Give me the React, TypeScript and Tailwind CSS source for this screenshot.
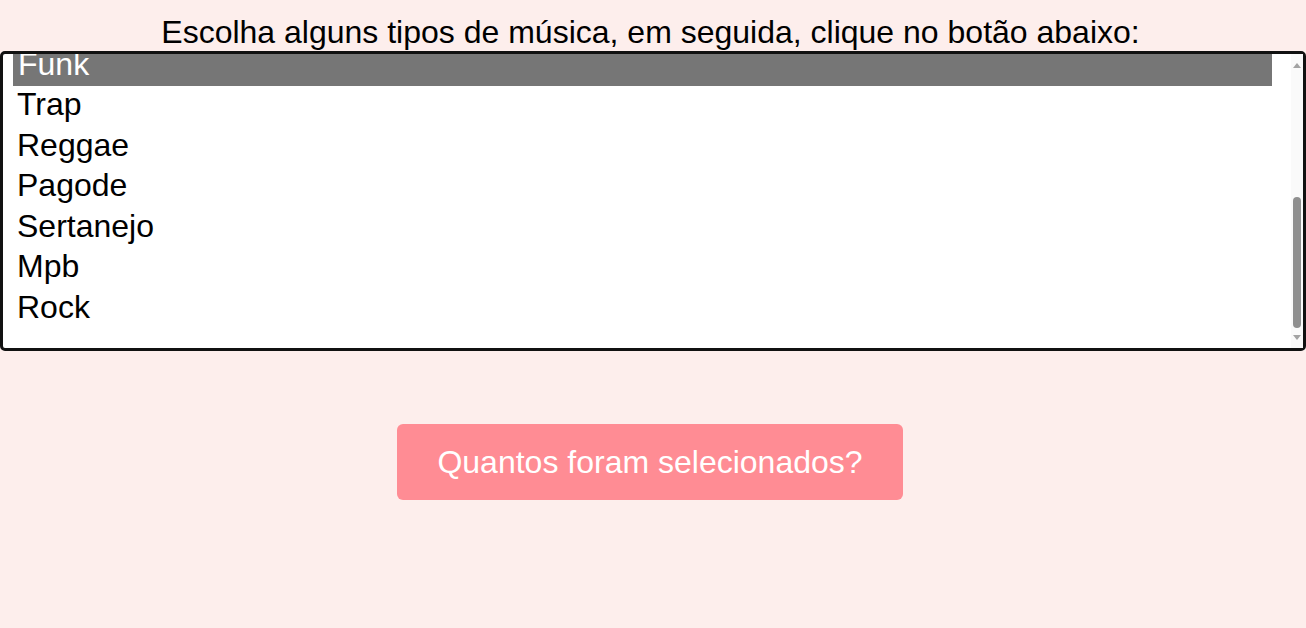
const genres = ['Funk', 'Trap', 'Reggae', 'Pagode', 'Sertanejo', 'Mpb', 'Rock'];

const App = () => {
  return (
    <div className="min-h-screen w-full bg-[#fdeeec] font-['Liberation_Sans',Arial,sans-serif] text-black">
      <h1 className="pr-[5px] pt-[14px] text-center text-[32px] leading-[37px] font-normal">
        Escolha alguns tipos de música, em seguida, clique no botão abaixo:
      </h1>

      <div className="flex h-[300px] w-full rounded-[5px] border-[3px] border-[#111] bg-white">
        <div className="flex flex-1 flex-col justify-end overflow-hidden pb-[19px] pl-[10px] pr-[19px]">
          {genres.map((g, i) => (
            <div
              key={g}
              className={
                i === 0
                  ? 'h-[40.5px] shrink-0 bg-[#767676] pb-[4px] pl-[5px] text-[32px] leading-[36px] text-white'
                  : 'h-[40.5px] shrink-0 pb-[4px] pl-[4px] text-[32px] leading-[36px]'
              }
            >
              {g}
            </div>
          ))}
        </div>

        {/* scrollbar */}
        <div className="flex w-[12px] flex-col items-center bg-[#fafafa]">
          <svg width="8" height="6" viewBox="0 0 8 6" className="mt-[8px]">
            <path d="M0 6 L4 1 L8 6 Z" fill="#a3a3a3" />
          </svg>
          <div className="flex-1" />
          <div className="h-[131px] w-[8px] rounded-full bg-[#8f8f8f]" />
          <svg width="8" height="6" viewBox="0 0 8 6" className="mb-[7px] mt-[7px]">
            <path d="M0 0 L8 0 L4 5 Z" fill="#a3a3a3" />
          </svg>
        </div>
      </div>

      <div className="mt-[73px] flex justify-center pr-[6px]">
        <button className="h-[76px] w-[506px] rounded-[6px] bg-[#ff8c94] text-[32px] text-white">
          Quantos foram selecionados?
        </button>
      </div>
    </div>
  );
};

export default App;
